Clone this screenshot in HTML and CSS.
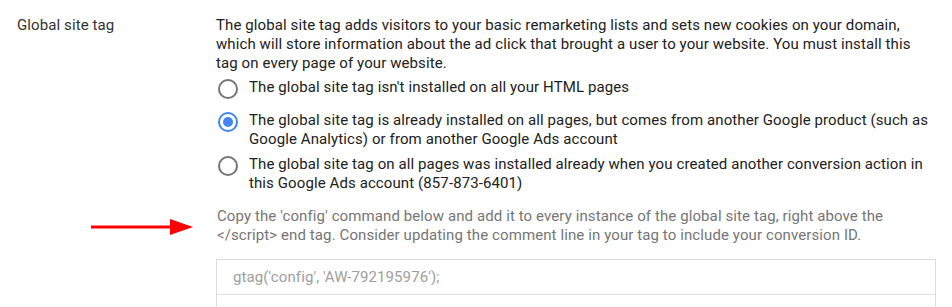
FILE: index.html
```html
<!DOCTYPE html>
<html lang="en">
<head>
<meta charset="UTF-8">
<title>Global site tag</title>
<link rel="stylesheet" href="styles.css">
</head>
<body>

<div class="setting">
  <div class="label">
    Global site tag
    <svg class="arrow" width="104" height="18" viewBox="0 0 104 18">
      <rect x="0" y="7.5" width="82" height="3" fill="#ff0000"/>
      <polygon points="79,1 102,9 79,17" fill="#ff0000"/>
    </svg>
  </div>
  <div class="content">
    <p class="intro">The global site tag adds visitors to your basic remarketing lists and sets new cookies on your domain, which will store information about the ad click that brought a user to your website. You must install this tag on every page of your website.</p>

    <div class="options">
      <label class="option first">
        <span class="radio"></span>
        <span class="option-text">The global site tag isn't installed on all your HTML pages</span>
      </label>
      <label class="option second">
        <span class="radio checked"></span>
        <span class="option-text">The global site tag is already installed on all pages, but comes from another Google product (such as Google Analytics) or from another Google Ads account</span>
      </label>
      <label class="option">
        <span class="radio"></span>
        <span class="option-text">The global site tag on all pages was installed already when you created another conversion action in this Google Ads account (857-873-6401)</span>
      </label>
    </div>

    <p class="hint">Copy the 'config' command below and add it to every instance of the global site tag, right above the &lt;/script&gt; end tag. Consider updating the comment line in your tag to include your conversion ID.</p>

    <div class="code-box">
      <div class="code-line">gtag('config', 'AW-792195976');</div>
      <div class="code-line empty"></div>
    </div>
  </div>
</div>

</body>
</html>
```

FILE: styles.css
```css
body {
  margin: 0;
  padding: 0;
  font-family: Roboto, "Liberation Sans", Arial, sans-serif;
  font-size: 15px;
  line-height: 19px;
  letter-spacing: 0.1px;
  color: #212121;
  background: #fff;
  overflow: hidden;
}

.setting {
  display: flex;
  padding: 16px 16px 0 17px;
}

.label {
  position: relative;
  width: 199px;
  flex-shrink: 0;
  color: #333;
}

/* arrow pointing at the hint text */
.arrow {
  position: absolute;
  left: 74px;
  top: 202px;
}

.content {
  flex: 1;
  max-width: 720px;
}

.intro {
  margin: 0 0 5px;
}

.option {
  display: flex;
  align-items: flex-start;
  cursor: pointer;
}

.option.first {
  margin-bottom: 12px;
}

.option.second {
  margin-bottom: 6px;
}

.radio {
  width: 16px;
  height: 16px;
  border: 2px solid #757575;
  border-radius: 50%;
  flex-shrink: 0;
  margin: 1px 11px 0 2px;
  position: relative;
}

.radio.checked {
  border-color: #4285f4;
}

.radio.checked::after {
  content: "";
  position: absolute;
  left: 3px;
  top: 3px;
  width: 10px;
  height: 10px;
  border-radius: 50%;
  background: #4285f4;
}

.hint {
  margin: 14px 0 14px 1px;
  color: #757575;
}

.code-box {
  border: 1px solid #dcdcdc;
  border-bottom: none;
}

.code-line {
  height: 34px;
  line-height: 34px;
  padding-left: 16px;
  color: #9e9e9e;
}

.code-line.empty {
  border-top: 1px solid #dcdcdc;
  height: 40px;
}
```
